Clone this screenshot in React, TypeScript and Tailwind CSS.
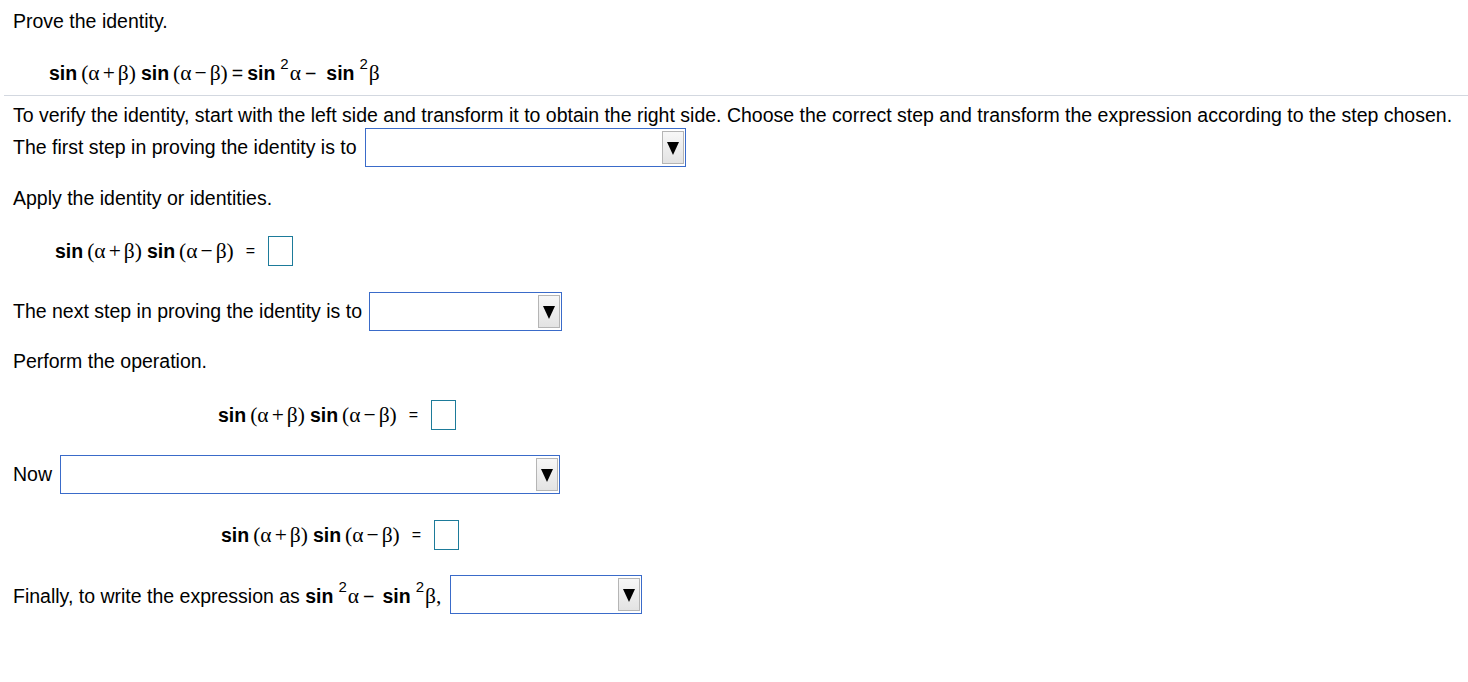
import React from "react";

const sans = "font-['Arial','Liberation_Sans',sans-serif]";
const serif = "font-['Times_New_Roman','Liberation_Serif',serif]";

function Sin({ sq }: { sq?: boolean }) {
  return (
    <>
      <b className="font-bold">sin</b>
      {sq && <span className="text-[15px] align-[11px] ml-[5px] mr-[1px] font-normal">2</span>}
    </>
  );
}

function G({ children }: { children: React.ReactNode }) {
  return <span className={`${serif} text-[21.5px]`}>{children}</span>;
}

function Paren({ op }: { op: string }) {
  return (
    <G>
      (α<span className="mx-[3px]">{op}</span>β)
    </G>
  );
}

function Lhs() {
  return (
    <span className="whitespace-nowrap">
      <Sin />
      <span className="ml-[4px]" />
      <Paren op="+" />
      <span className="ml-[5px]" />
      <Sin />
      <span className="ml-[4px]" />
      <Paren op="−" />
    </span>
  );
}

function Select({ w }: { w: string }) {
  return (
    <div className={`${w} h-[39px] shrink-0 border border-[#3a6bc9] bg-white flex items-center justify-end pr-[1px]`}>
      <div className="w-[22px] h-[33px] border border-[#b5b5b5] bg-gradient-to-b from-[#f7f7f7] to-[#e3e3e3] flex items-center justify-center">
        <svg width="12" height="14" viewBox="0 0 12 14">
          <path d="M0 1 L12 1 L6 14 Z" fill="#000" />
        </svg>
      </div>
    </div>
  );
}

function Box() {
  return <div className="w-[25px] h-[30px] border-[1.5px] border-[#1d7b9a] bg-white" />;
}

function EqRow({ pl, mt, h }: { pl: string; mt: string; h: string }) {
  return (
    <div className={`flex items-center ${pl} ${mt} ${h}`}>
      <Lhs />
      <span className="text-[16px] ml-[12px] mr-[13px]">=</span>
      <Box />
    </div>
  );
}

export default function App() {
  return (
    <div className={`w-[1468px] h-[682px] bg-white text-black ${sans} text-[19.5px] overflow-hidden`}>
      <div className="h-[44px] pl-[13px] flex items-center">Prove the identity.</div>

      <div className="mt-[5px] h-[44px] pl-[49px] flex items-center">
        <span className="whitespace-nowrap">
          <Lhs />
          <span className="mx-[4px]">=</span>
          <Sin sq />
          <G>α</G>
          <span className="ml-[4px] mr-[10px]">−</span>
          <Sin sq />
          <G>β</G>
        </span>
      </div>

      <div className="mt-[2px] ml-[4px] h-px bg-[#d3d8e0]" />

      <div className="mt-[8px] h-[24px] pl-[13px] flex items-center whitespace-nowrap">
        To verify the identity, start with the left side and transform it to obtain the right side. Choose the correct step and transform the expression according to the step chosen.
      </div>

      <div className="h-[39px] pl-[13px] flex items-center gap-[8px]">
        <span>The first step in proving the identity is to</span>
        <Select w="w-[321px]" />
      </div>

      <div className="h-[64px] pl-[13px] flex items-center">Apply the identity or identities.</div>

      <EqRow pl="pl-[55px]" mt="mt-0" h="h-[40px]" />

      <div className="mt-[21px] h-[39px] pl-[13px] flex items-center gap-[7px]">
        <span>The next step in proving the identity is to</span>
        <Select w="w-[193px]" />
      </div>

      <div className="h-[62px] pl-[13px] flex items-center">Perform the operation.</div>

      <EqRow pl="pl-[218px]" mt="mt-0" h="h-[44px]" />

      <div className="mt-[18px] h-[39px] pl-[13px] flex items-center gap-[8px]">
        <span>Now</span>
        <Select w="w-[500px]" />
      </div>

      <EqRow pl="pl-[221px]" mt="mt-[20px]" h="h-[42px]" />

      <div className="mt-[19px] h-[39px] pl-[13px] flex items-center">
        <span className="whitespace-nowrap">
          Finally, to write the expression as <Sin sq />
          <G>α</G>
          <span className="ml-[4px] mr-[8px]">−</span>
          <Sin sq />
          <G>β,</G>
        </span>
        <span className="w-[9px]" />
        <Select w="w-[192px]" />
      </div>
    </div>
  );
}
